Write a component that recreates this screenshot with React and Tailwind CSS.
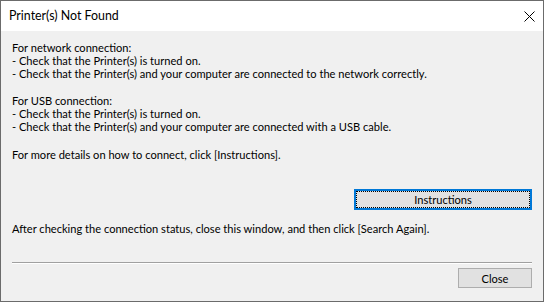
export default function App() {
  return (
    <div className="w-[544px] h-[302px] border border-[#6b6b6b] bg-[#f0f0f0] flex flex-col text-black font-['Lato',sans-serif]">
      {/* Title bar */}
      <div className="h-[30px] bg-white flex items-center justify-between pl-[8px] pr-[8px]">
        <span className="text-[12.4px] leading-none">Printer(s) Not Found</span>
        <svg width="11" height="11" viewBox="0 0 11 11" className="block">
          <path d="M0.5 0.5L10.5 10.5M10.5 0.5L0.5 10.5" stroke="#000" strokeWidth="1" fill="none" />
        </svg>
      </div>

      {/* Body */}
      <div className="flex-1 flex flex-col px-[11px] pt-[10px] text-[11.1px] leading-[13px]">
        <div>
          <p>For network connection:</p>
          <p>- Check that the Printer(s) is turned on.</p>
          <p>- Check that the Printer(s) and your computer are connected to the network correctly.</p>
        </div>
        <div className="mt-[14px]">
          <p>For USB connection:</p>
          <p>- Check that the Printer(s) is turned on.</p>
          <p>- Check that the Printer(s) and your computer are connected with a USB cable.</p>
        </div>
        <p className="mt-[15px]">For more details on how to connect, click [Instructions].</p>

        <button className="self-end mt-[28px] w-[178px] h-[21px] border-2 border-[#0078d7] bg-[#e1e1e1] p-0">
          <div className="h-full border border-dotted border-black flex items-center justify-center">
            Instructions
          </div>
        </button>

        <p className="mt-[12px]">After checking the connection status, close this window, and then click [Search Again].</p>

        <div className="mt-[27px] border-t border-[#a0a0a0] border-b border-b-white" />

        <button className="self-end mt-[4px] w-[74px] h-[20px] border border-[#adadad] bg-[#e1e1e1] flex items-center justify-center">
          Close
        </button>
      </div>
    </div>
  );
}
